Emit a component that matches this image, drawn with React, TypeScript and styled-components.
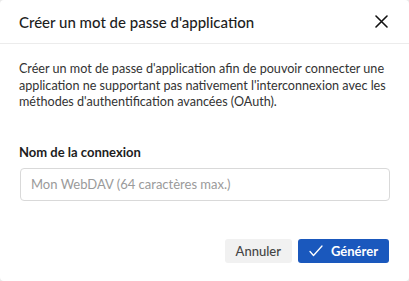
import React from "react";
import styled, { createGlobalStyle } from "styled-components";

const Global = createGlobalStyle`
  html, body { margin: 0; padding: 0; background: #e9e9e9; }
  body { font-family: Lato, "Noto Sans", sans-serif; }
  * { box-sizing: border-box; }
`;

const Dialog = styled.div`
  width: 409px;
  height: 281px;
  background: #fff;
  border-radius: 4px;
  display: flex;
  flex-direction: column;
  overflow: hidden;
`;

const Header = styled.div`
  height: 44px;
  display: flex;
  align-items: center;
  justify-content: space-between;
  padding: 0 20px 0 19px;
  border-bottom: 1px solid #ececec;
`;

const Title = styled.h1`
  margin: 0;
  font-size: 15px;
  font-weight: 500;
  color: #1d1d1d;
`;

const CloseButton = styled.button`
  border: none;
  background: none;
  padding: 0;
  width: 16px;
  height: 16px;
  display: flex;
  align-items: center;
  justify-content: center;
  cursor: pointer;
`;

const Body = styled.div`
  padding: 17px 16px 0 19px;
  display: flex;
  flex-direction: column;
`;

const Description = styled.p`
  margin: 0;
  font-size: 12.6px;
  line-height: 16.5px;
  color: #333;
`;

const Label = styled.label`
  margin-top: 33px;
  font-size: 13px;
  font-weight: 700;
  color: #1d1d1d;
`;

const Input = styled.input`
  margin-top: 8px;
  height: 33px;
  width: 370px;
  margin-left: 1px;
  border: 1px solid #d9d9d9;
  border-radius: 4px;
  padding: 0 10px;
  font-family: inherit;
  font-size: 13px;
  color: #1d1d1d;
  &::placeholder { color: #9a9a9a; }
  outline: none;
`;

const Footer = styled.div`
  margin-top: auto;
  display: flex;
  justify-content: flex-end;
  gap: 6px;
  padding: 0 20px 18px;
`;

const Button = styled.button<{ $primary?: boolean }>`
  height: 24px;
  border: none;
  border-radius: 3px;
  font-family: inherit;
  font-size: 13px;
  font-weight: ${(p) => (p.$primary ? 700 : 500)};
  display: flex;
  align-items: center;
  gap: 8px;
  padding: 0 ${(p) => (p.$primary ? "11px" : "11px")};
  background: ${(p) => (p.$primary ? "#1a58bd" : "#f1f1f1")};
  color: ${(p) => (p.$primary ? "#fff" : "#444")};
  cursor: pointer;
`;

export default function App() {
  return (
    <>
      <Global />
      <Dialog>
        <Header>
          <Title>Créer un mot de passe d'application</Title>
          <CloseButton aria-label="Fermer">
            <svg width="13" height="13" viewBox="0 0 13 13">
              <path d="M1 1L12 12M12 1L1 12" stroke="#111" strokeWidth="1.6" strokeLinecap="round" />
            </svg>
          </CloseButton>
        </Header>
        <Body>
          <Description>
            Créer un mot de passe d'application afin de pouvoir connecter une application ne supportant pas nativement l'interconnexion avec les méthodes d'authentification avancées (OAuth).
          </Description>
          <Label>Nom de la connexion</Label>
          <Input placeholder="Mon WebDAV (64 caractères max.)" />
        </Body>
        <Footer>
          <Button>Annuler</Button>
          <Button $primary>
            <svg width="14" height="12" viewBox="0 0 14 12">
              <path d="M1 6.5L4.5 10.5L13 1" stroke="#fff" strokeWidth="1.3" fill="none" strokeLinecap="round" strokeLinejoin="round" />
            </svg>
            Générer
          </Button>
        </Footer>
      </Dialog>
    </>
  );
}
